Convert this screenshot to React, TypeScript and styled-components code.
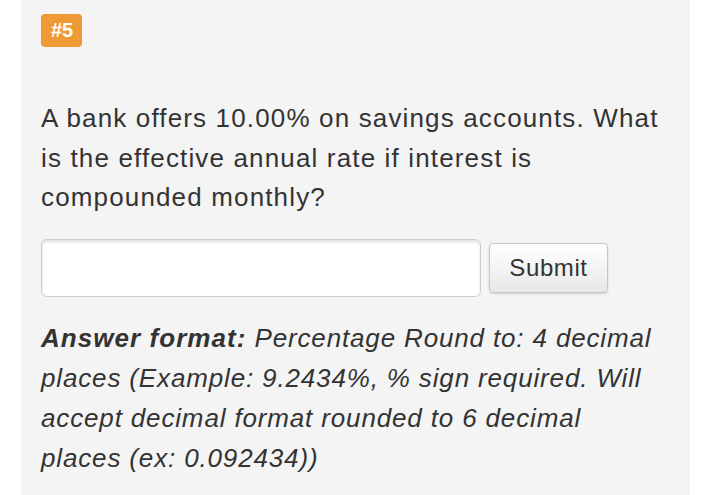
import styled, { createGlobalStyle } from 'styled-components';

const GlobalStyle = createGlobalStyle`
    body {
        margin: 0;
        background: #ffffff;
        font-family: "Liberation Sans", Arial, sans-serif;
    }
`;

const Panel = styled.div`
    margin-left: 21px;
    width: 669px;
    min-height: 495px;
    background: #f4f4f4;
    padding: 14px 27px 20px 20px;
    box-sizing: border-box;
    color: #333333;
`;

const Badge = styled.span`
    display: inline-block;
    background: #ef9a34;
    color: #ffffff;
    font-weight: 700;
    font-size: 20px;
    line-height: 33px;
    padding: 0 9px 0 10px;
    border-radius: 4px;
    vertical-align: top;
`;

const Question = styled.p`
    margin: 52px 0 0 0;
    font-size: 26px;
    line-height: 39.5px;
    letter-spacing: 1.15px;
`;

const AnswerRow = styled.div`
    display: flex;
    align-items: center;
    gap: 8px;
    margin-top: 21px;
`;

const AnswerInput = styled.input`
    width: 440px;
    height: 58px;
    box-sizing: border-box;
    border: 1px solid #cccccc;
    border-radius: 6px;
    background: #ffffff;
    box-shadow: inset 0 2px 3px rgba(0, 0, 0, 0.12);
    font-size: 22px;
    padding: 0 10px;
`;

const SubmitButton = styled.button`
    width: 119px;
    height: 50px;
    border: 1px solid #c6c6c6;
    border-radius: 4px;
    background: linear-gradient(#ffffff, #e8e8e8);
    box-shadow: 0 1px 2px rgba(0, 0, 0, 0.15);
    font-family: "Liberation Sans", Arial, sans-serif;
    font-size: 24px;
    letter-spacing: 0.6px;
    color: #333333;
`;

const Format = styled.p`
    margin: 21px 0 0 0;
    font-size: 26px;
    line-height: 40px;
    font-style: italic;
    letter-spacing: 0.85px;

    b {
        font-weight: 700;
        letter-spacing: 1.05px;
    }
`;

export default function App() {
    return (
        <>
            <GlobalStyle />
            <Panel>
                <Badge>#5</Badge>
                <Question>
                    A bank offers 10.00% on savings accounts. What is the effective annual rate if interest is
                    compounded monthly?
                </Question>
                <AnswerRow>
                    <AnswerInput type="text" />
                    <SubmitButton>Submit</SubmitButton>
                </AnswerRow>
                <Format>
                    <b>Answer format:</b> Percentage Round to: 4 decimal places (Example: 9.2434%, % sign required.
                    Will accept decimal format rounded to 6 decimal places (ex: 0.092434))
                </Format>
            </Panel>
        </>
    );
}
